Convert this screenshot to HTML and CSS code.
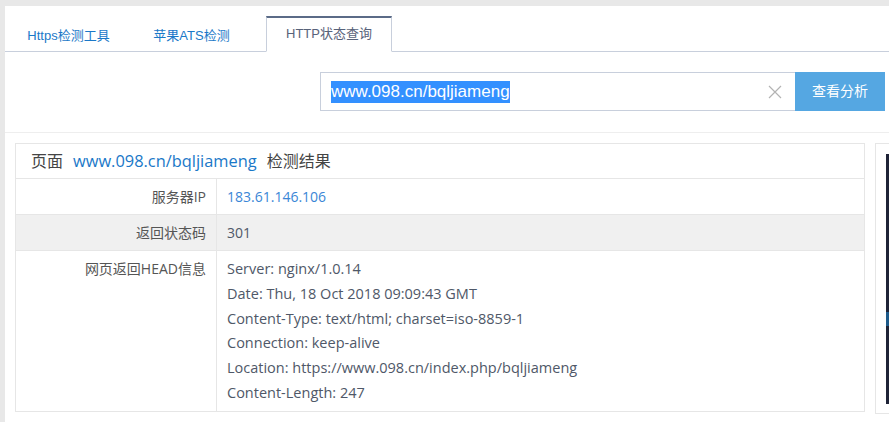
FILE: index.html
```html
<!DOCTYPE html>
<html lang="zh-CN">
<head>
<meta charset="utf-8">
<title>HTTP状态查询</title>
<link rel="stylesheet" href="styles.css">
</head>
<body>
<div class="panel">
  <div class="tabs">
    <div class="tab">Https检测工具</div>
    <div class="tab">苹果ATS检测</div>
    <div class="tab active">HTTP状态查询</div>
  </div>
  <div class="search">
    <div class="input">
      <span class="sel">www.098.cn/bqljiameng</span>
      <svg class="clear" width="14" height="14" viewBox="0 0 14 14"><path d="M1 1L13 13M13 1L1 13" stroke="#b3b3b3" stroke-width="1.2" fill="none"/></svg>
    </div>
    <div class="btn">查看分析</div>
  </div>
  <div class="content">
    <div class="card">
      <div class="card-head">页面<span class="url">www.098.cn/bqljiameng</span>检测结果</div>
      <div class="row">
        <div class="label">服务器IP</div>
        <div class="value ip">183.61.146.106</div>
      </div>
      <div class="row gray">
        <div class="label">返回状态码</div>
        <div class="value">301</div>
      </div>
      <div class="row tall">
        <div class="label">网页返回HEAD信息</div>
        <div class="value head">
          <div>Server: nginx/1.0.14</div>
          <div>Date: Thu, 18 Oct 2018 09:09:43 GMT</div>
          <div>Content-Type: text/html; charset=iso-8859-1</div>
          <div>Connection: keep-alive</div>
          <div>Location: https://www.098.cn/index.php/bqljiameng</div>
          <div>Content-Length: 247</div>
        </div>
      </div>
    </div>
    <div class="side">
      <div class="ad"><span class="blip"></span></div>
    </div>
  </div>
</div>
</body>
</html>
```
FILE: styles.css
```css
html, body {
  margin: 0;
  height: 100%;
}
body {
  background: #e8e8e8;
  padding: 6px 0 0 5px;
  box-sizing: border-box;
  overflow: hidden;
  font-family: "Liberation Sans", "Noto Sans CJK SC", sans-serif;
  color: #555;
}
.panel {
  background: #fff;
  height: 100%;
  overflow: hidden;
}
.tabs {
  display: flex;
  padding-top: 10px;
  border-bottom: 1px solid #c8cfdc;
  height: 35px;
}
.tab {
  box-sizing: border-box;
  height: 36px;
  width: 127px;
  text-align: center;
  line-height: 35px;
  font-size: 13px;
  color: #1a78c8;
  border: 1px solid transparent;
  border-top-width: 2px;
}
.tab:nth-child(2) {
  width: 119px;
}
.tab.active {
  margin-left: 15px;
  width: 126px;
  color: #58627a;
  background: #fff;
  border-color: #c8cfdc;
  border-top-color: #5b6b87;
  border-bottom-color: #fff;
  line-height: 32px;
}
.search {
  display: flex;
  justify-content: flex-end;
  padding: 20px 4px 21px 0;
  border-bottom: 1px solid #eeeeee;
}
.input {
  box-sizing: border-box;
  width: 475px;
  height: 39px;
  border: 1px solid #c8cfdc;
  border-right: none;
  display: flex;
  align-items: center;
  padding-left: 10px;
  position: relative;
}
.sel {
  background: #3390ff;
  color: #fff;
  font-size: 17px;
  line-height: 22px;
}
.clear {
  position: absolute;
  right: 13px;
  top: 12px;
}
.btn {
  width: 90px;
  height: 39px;
  background: #55a7e2;
  color: #fff;
  font-size: 14px;
  line-height: 39px;
  text-align: center;
}
.content {
  display: flex;
  gap: 10px;
  padding: 10px 0 0 10px;
  font-family: "Open Sans", "Noto Sans CJK SC", sans-serif;
}
.card {
  flex-shrink: 0;
  width: 850px;
  box-sizing: border-box;
  border: 1px solid #e6e6e6;
  align-self: flex-start;
}
.card-head {
  height: 34px;
  line-height: 34px;
  padding-left: 15px;
  font-size: 16px;
  color: #444;
  border-bottom: 1px solid #e6e6e6;
}
.url {
  color: #1a78c8;
  margin: 0 10px;
  font-size: 16.4px;
}
.row {
  display: flex;
  border-bottom: 1px solid #e6e6e6;
  font-size: 14px;
}
.row:last-child {
  border-bottom: none;
}
.row.gray {
  background: #f0f0f0;
}
.label {
  width: 201px;
  box-sizing: border-box;
  border-right: 1px solid #e6e6e6;
  text-align: right;
  padding-right: 10px;
  line-height: 35px;
  color: #555;
}
.value {
  padding-left: 10px;
  line-height: 35px;
  color: #4f5868;
}
.value.ip {
  color: #3a86d6;
}
.value.head {
  font-size: 14.5px;
}
.row.tall .label,
.row.tall .value {
  line-height: 24.8px;
  padding-top: 6px;
  padding-bottom: 5px;
}
.side {
  flex-shrink: 0;
  width: 260px;
  height: 271px;
  box-sizing: border-box;
  border: 1px solid #e6e6e6;
  padding: 10px;
}
.ad {
  height: 250px;
  background: #1f2337;
  position: relative;
}
.blip {
  position: absolute;
  left: 0;
  top: 158px;
  width: 3px;
  height: 14px;
  background: #1d5a8a;
}
```
